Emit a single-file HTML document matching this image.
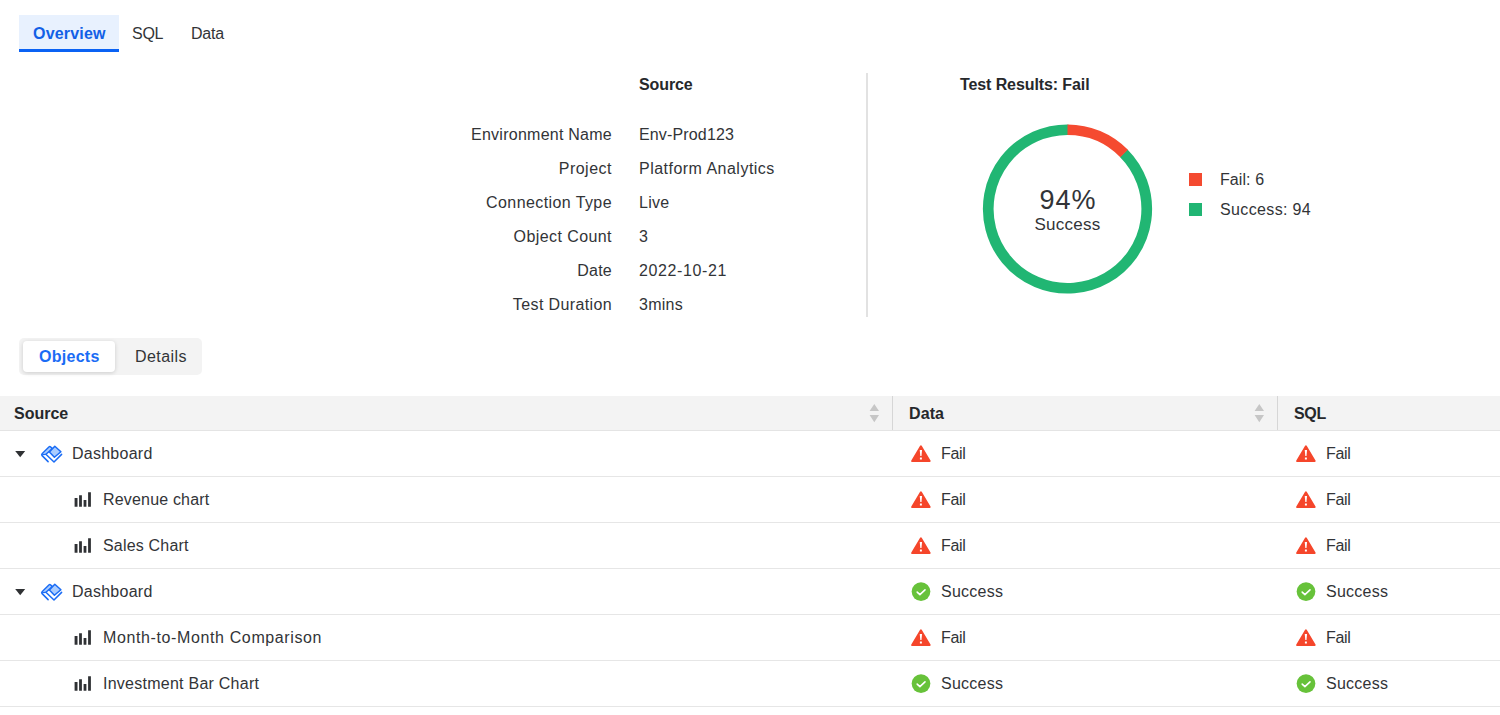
<!DOCTYPE html>
<html><head><meta charset="utf-8">
<style>
html,body{margin:0;padding:0;background:#fff;}
body{width:1500px;height:715px;position:relative;overflow:hidden;font-family:"Liberation Sans",sans-serif;color:#323437;font-size:16px;}
.t{position:absolute;white-space:nowrap;line-height:18px;height:18px;margin-top:1px;letter-spacing:0.25px;}
.b{font-weight:bold;color:#26282b;}
.r{text-align:right;}
.b{letter-spacing:0;}
.ttl{font-size:16px;letter-spacing:-0.1px;}
.abs{position:absolute;}
.row{position:absolute;left:0;width:1500px;height:45px;border-bottom:1px solid #e6e6e6;}
</style></head><body>

<!-- tabs -->
<div class="abs" style="left:19px;top:15px;width:100px;height:34px;background:#e8f1fe;"></div>
<div class="abs" style="left:19px;top:49px;width:100px;height:3px;background:#0a62f4;"></div>
<div class="t b" style="left:33px;top:24px;color:#1260e6;letter-spacing:0.2px;">Overview</div>
<div class="t" style="left:132px;top:24px;letter-spacing:-0.25px;">SQL</div>
<div class="t" style="left:191px;top:24px;letter-spacing:-0.18px;">Data</div>

<!-- source details -->
<div class="t b ttl" style="left:639px;top:75px;">Source</div>
<div class="t r" style="left:412px;width:200px;top:125px;">Environment Name</div>
<div class="t r" style="left:412px;width:200px;top:159px;letter-spacing:0.5px;">Project</div>
<div class="t r" style="left:412px;width:200px;top:193px;letter-spacing:0.41px;">Connection Type</div>
<div class="t r" style="left:412px;width:200px;top:227px;letter-spacing:0.42px;">Object Count</div>
<div class="t r" style="left:412px;width:200px;top:261px;">Date</div>
<div class="t r" style="left:412px;width:200px;top:295px;letter-spacing:0.375px;">Test Duration</div>
<div class="t" style="left:639px;top:125px;letter-spacing:0.15px;">Env-Prod123</div>
<div class="t" style="left:639px;top:159px;letter-spacing:0.48px;">Platform Analytics</div>
<div class="t" style="left:639px;top:193px;">Live</div>
<div class="t" style="left:639px;top:227px;">3</div>
<div class="t" style="left:639px;top:261px;letter-spacing:0.61px;">2022-10-21</div>
<div class="t" style="left:639px;top:295px;">3mins</div>

<div class="abs" style="left:866px;top:73px;width:2px;height:244px;background:#e2e2e2;"></div>

<!-- test results -->
<div class="t b ttl" style="left:960px;top:75px;">Test Results: Fail</div>
<svg class="abs" style="left:967px;top:109px;" width="200" height="200" viewBox="0 0 200 200">
  <path d="M156.73 44.16 A79.25 79.25 0 1 1 101.33 20.75" fill="none" stroke="#21b673" stroke-width="10.7"/>
  <path d="M100.5 20.75 A79.25 79.25 0 0 1 157.1 44.54" fill="none" stroke="#f54a30" stroke-width="10.7"/>
</svg>
<div class="t" style="left:967px;width:201px;text-align:center;top:185px;font-size:27px;line-height:29px;height:29px;letter-spacing:1px;text-indent:1px;">94%</div>
<div class="t" style="left:967px;width:201px;text-align:center;top:215px;font-size:17px;">Success</div>

<div class="abs" style="left:1188.5px;top:172.5px;width:13.3px;height:13.3px;background:#f44a30;"></div>
<div class="abs" style="left:1188.5px;top:202.5px;width:13.3px;height:13.3px;background:#20b573;"></div>
<div class="t" style="left:1220px;top:170px;letter-spacing:0.08px;">Fail: 6</div>
<div class="t" style="left:1220px;top:200px;letter-spacing:0.36px;">Success: 94</div>

<!-- segmented -->
<div class="abs" style="left:19px;top:338px;width:183px;height:37px;background:#f3f3f3;border-radius:5px;"></div>
<div class="abs" style="left:23px;top:341px;width:92px;height:31px;background:#fff;border-radius:4px;box-shadow:0 1px 4px rgba(0,0,0,0.16);"></div>
<div class="t b" style="left:39px;top:347px;color:#1a6cf5;letter-spacing:0.28px;">Objects</div>
<div class="t" style="left:135px;top:347px;letter-spacing:0.42px;">Details</div>

<!-- table header -->
<div class="abs" style="left:0;top:396px;width:1500px;height:34px;background:#f3f3f3;border-bottom:1px solid #e4e4e4;"></div>
<div class="abs" style="left:892px;top:396px;width:1px;height:34px;background:#d6d6d6;"></div>
<div class="abs" style="left:1277px;top:396px;width:1px;height:34px;background:#d6d6d6;"></div>
<div class="t b" style="left:14px;top:404px;">Source</div>
<div class="t b" style="left:909px;top:404px;letter-spacing:0.1px;">Data</div>
<div class="t b" style="left:1294px;top:404px;letter-spacing:-0.3px;">SQL</div>
<svg class="abs" style="left:869px;top:403px;" width="11" height="20" viewBox="0 0 11 20"><path d="M5.3 1 L10 8 L0.6 8 Z M0.6 12 L10 12 L5.3 19.3 Z" fill="#c6c6c6"/></svg>
<svg class="abs" style="left:1254px;top:403px;" width="11" height="20" viewBox="0 0 11 20"><path d="M5.3 1 L10 8 L0.6 8 Z M0.6 12 L10 12 L5.3 19.3 Z" fill="#c6c6c6"/></svg>

<div id="rows">
<div class="row" style="top:431px;">
<svg class="abs" style="left:14px;top:19px;" width="12" height="8" viewBox="0 0 12 8"><path d="M1.2 1 L11.2 1 L6.2 7.2 Z" fill="#2f3134"/></svg>
<svg class="abs" style="left:38px;top:11px;" width="28" height="24" viewBox="0 0 28 24"><path d="M12 4.6 L4.2 12.4 L7.9 12.3 L14.3 6.4 Z" fill="#a9ccff"/><path d="M10.1 19.6 L4.1 13.6 Q3.2 12.7 4.1 11.8 L10.9 5 Q11.8 4.1 12.7 5 L14.3 6.6" fill="none" stroke="#1a6cf5" stroke-width="1.5" stroke-linecap="round"/><path d="M4.2 12.6 L7.9 12.3" stroke="#1a6cf5" stroke-width="1.2"/><path d="M14.5 6.6 L7.9 12.3 L16 20 L23.6 12.4" fill="none" stroke="#1a6cf5" stroke-width="1.5" stroke-linecap="round" stroke-linejoin="round"/><path d="M16.8 4.2 L22.9 9.7 L16.4 15.3 L11.4 10.1 Z" fill="#a9ccff" stroke="#1a6cf5" stroke-width="1.5" stroke-linejoin="round"/></svg>
<div class="t" style="left:72px;top:13px;">Dashboard</div>
<svg class="abs" style="left:909px;top:12px;" width="24" height="20" viewBox="0 0 24 20"><path d="M11.9 3.2 L3.1 18.1 L20.7 18.1 Z" fill="#f5462b" stroke="#f5462b" stroke-width="1.9" stroke-linejoin="round"/><path d="M10.75 6.9 L13.05 6.9 L12.5 13.1 L11.3 13.1 Z" fill="#fff"/><rect x="10.9" y="14.4" width="2" height="2.1" rx="0.3" fill="#fff"/></svg>
<div class="t" style="left:941px;top:13px;letter-spacing:-0.3px;">Fail</div>
<svg class="abs" style="left:1294px;top:12px;" width="24" height="20" viewBox="0 0 24 20"><path d="M11.9 3.2 L3.1 18.1 L20.7 18.1 Z" fill="#f5462b" stroke="#f5462b" stroke-width="1.9" stroke-linejoin="round"/><path d="M10.75 6.9 L13.05 6.9 L12.5 13.1 L11.3 13.1 Z" fill="#fff"/><rect x="10.9" y="14.4" width="2" height="2.1" rx="0.3" fill="#fff"/></svg>
<div class="t" style="left:1326px;top:13px;letter-spacing:-0.3px;">Fail</div>
</div>
<div class="row" style="top:477px;">
<svg class="abs" style="left:66px;top:7px;" width="30" height="24" viewBox="0 0 30 24"><path d="M8.6 14.1h2.9v8.6h-2.9z M13.1 11.2h2.8v11.5h-2.8z M17.6 15.9h2.8v6.8h-2.8z M22.1 8.2h2.8v14.5h-2.8z" fill="#2f3134"/></svg>
<div class="t" style="left:103px;top:13px;letter-spacing:0.18px;">Revenue chart</div>
<svg class="abs" style="left:909px;top:12px;" width="24" height="20" viewBox="0 0 24 20"><path d="M11.9 3.2 L3.1 18.1 L20.7 18.1 Z" fill="#f5462b" stroke="#f5462b" stroke-width="1.9" stroke-linejoin="round"/><path d="M10.75 6.9 L13.05 6.9 L12.5 13.1 L11.3 13.1 Z" fill="#fff"/><rect x="10.9" y="14.4" width="2" height="2.1" rx="0.3" fill="#fff"/></svg>
<div class="t" style="left:941px;top:13px;letter-spacing:-0.3px;">Fail</div>
<svg class="abs" style="left:1294px;top:12px;" width="24" height="20" viewBox="0 0 24 20"><path d="M11.9 3.2 L3.1 18.1 L20.7 18.1 Z" fill="#f5462b" stroke="#f5462b" stroke-width="1.9" stroke-linejoin="round"/><path d="M10.75 6.9 L13.05 6.9 L12.5 13.1 L11.3 13.1 Z" fill="#fff"/><rect x="10.9" y="14.4" width="2" height="2.1" rx="0.3" fill="#fff"/></svg>
<div class="t" style="left:1326px;top:13px;letter-spacing:-0.3px;">Fail</div>
</div>
<div class="row" style="top:523px;">
<svg class="abs" style="left:66px;top:7px;" width="30" height="24" viewBox="0 0 30 24"><path d="M8.6 14.1h2.9v8.6h-2.9z M13.1 11.2h2.8v11.5h-2.8z M17.6 15.9h2.8v6.8h-2.8z M22.1 8.2h2.8v14.5h-2.8z" fill="#2f3134"/></svg>
<div class="t" style="left:103px;top:13px;letter-spacing:0.19px;">Sales Chart</div>
<svg class="abs" style="left:909px;top:12px;" width="24" height="20" viewBox="0 0 24 20"><path d="M11.9 3.2 L3.1 18.1 L20.7 18.1 Z" fill="#f5462b" stroke="#f5462b" stroke-width="1.9" stroke-linejoin="round"/><path d="M10.75 6.9 L13.05 6.9 L12.5 13.1 L11.3 13.1 Z" fill="#fff"/><rect x="10.9" y="14.4" width="2" height="2.1" rx="0.3" fill="#fff"/></svg>
<div class="t" style="left:941px;top:13px;letter-spacing:-0.3px;">Fail</div>
<svg class="abs" style="left:1294px;top:12px;" width="24" height="20" viewBox="0 0 24 20"><path d="M11.9 3.2 L3.1 18.1 L20.7 18.1 Z" fill="#f5462b" stroke="#f5462b" stroke-width="1.9" stroke-linejoin="round"/><path d="M10.75 6.9 L13.05 6.9 L12.5 13.1 L11.3 13.1 Z" fill="#fff"/><rect x="10.9" y="14.4" width="2" height="2.1" rx="0.3" fill="#fff"/></svg>
<div class="t" style="left:1326px;top:13px;letter-spacing:-0.3px;">Fail</div>
</div>
<div class="row" style="top:569px;">
<svg class="abs" style="left:14px;top:19px;" width="12" height="8" viewBox="0 0 12 8"><path d="M1.2 1 L11.2 1 L6.2 7.2 Z" fill="#2f3134"/></svg>
<svg class="abs" style="left:38px;top:11px;" width="28" height="24" viewBox="0 0 28 24"><path d="M12 4.6 L4.2 12.4 L7.9 12.3 L14.3 6.4 Z" fill="#a9ccff"/><path d="M10.1 19.6 L4.1 13.6 Q3.2 12.7 4.1 11.8 L10.9 5 Q11.8 4.1 12.7 5 L14.3 6.6" fill="none" stroke="#1a6cf5" stroke-width="1.5" stroke-linecap="round"/><path d="M4.2 12.6 L7.9 12.3" stroke="#1a6cf5" stroke-width="1.2"/><path d="M14.5 6.6 L7.9 12.3 L16 20 L23.6 12.4" fill="none" stroke="#1a6cf5" stroke-width="1.5" stroke-linecap="round" stroke-linejoin="round"/><path d="M16.8 4.2 L22.9 9.7 L16.4 15.3 L11.4 10.1 Z" fill="#a9ccff" stroke="#1a6cf5" stroke-width="1.5" stroke-linejoin="round"/></svg>
<div class="t" style="left:72px;top:13px;">Dashboard</div>
<svg class="abs" style="left:909px;top:12px;" width="24" height="20" viewBox="0 0 24 20"><circle cx="12" cy="10.6" r="9.35" fill="#67c23a"/><path d="M8.2 11.1 L10.9 13.6 L16 8.8" fill="none" stroke="#fff" stroke-width="1.6" stroke-linecap="round" stroke-linejoin="round"/></svg>
<div class="t" style="left:941px;top:13px;">Success</div>
<svg class="abs" style="left:1294px;top:12px;" width="24" height="20" viewBox="0 0 24 20"><circle cx="12" cy="10.6" r="9.35" fill="#67c23a"/><path d="M8.2 11.1 L10.9 13.6 L16 8.8" fill="none" stroke="#fff" stroke-width="1.6" stroke-linecap="round" stroke-linejoin="round"/></svg>
<div class="t" style="left:1326px;top:13px;">Success</div>
</div>
<div class="row" style="top:615px;">
<svg class="abs" style="left:66px;top:7px;" width="30" height="24" viewBox="0 0 30 24"><path d="M8.6 14.1h2.9v8.6h-2.9z M13.1 11.2h2.8v11.5h-2.8z M17.6 15.9h2.8v6.8h-2.8z M22.1 8.2h2.8v14.5h-2.8z" fill="#2f3134"/></svg>
<div class="t" style="left:103px;top:13px;letter-spacing:0.62px;">Month-to-Month Comparison</div>
<svg class="abs" style="left:909px;top:12px;" width="24" height="20" viewBox="0 0 24 20"><path d="M11.9 3.2 L3.1 18.1 L20.7 18.1 Z" fill="#f5462b" stroke="#f5462b" stroke-width="1.9" stroke-linejoin="round"/><path d="M10.75 6.9 L13.05 6.9 L12.5 13.1 L11.3 13.1 Z" fill="#fff"/><rect x="10.9" y="14.4" width="2" height="2.1" rx="0.3" fill="#fff"/></svg>
<div class="t" style="left:941px;top:13px;letter-spacing:-0.3px;">Fail</div>
<svg class="abs" style="left:1294px;top:12px;" width="24" height="20" viewBox="0 0 24 20"><path d="M11.9 3.2 L3.1 18.1 L20.7 18.1 Z" fill="#f5462b" stroke="#f5462b" stroke-width="1.9" stroke-linejoin="round"/><path d="M10.75 6.9 L13.05 6.9 L12.5 13.1 L11.3 13.1 Z" fill="#fff"/><rect x="10.9" y="14.4" width="2" height="2.1" rx="0.3" fill="#fff"/></svg>
<div class="t" style="left:1326px;top:13px;letter-spacing:-0.3px;">Fail</div>
</div>
<div class="row" style="top:661px;">
<svg class="abs" style="left:66px;top:7px;" width="30" height="24" viewBox="0 0 30 24"><path d="M8.6 14.1h2.9v8.6h-2.9z M13.1 11.2h2.8v11.5h-2.8z M17.6 15.9h2.8v6.8h-2.8z M22.1 8.2h2.8v14.5h-2.8z" fill="#2f3134"/></svg>
<div class="t" style="left:103px;top:13px;letter-spacing:0.25px;">Investment Bar Chart</div>
<svg class="abs" style="left:909px;top:12px;" width="24" height="20" viewBox="0 0 24 20"><circle cx="12" cy="10.6" r="9.35" fill="#67c23a"/><path d="M8.2 11.1 L10.9 13.6 L16 8.8" fill="none" stroke="#fff" stroke-width="1.6" stroke-linecap="round" stroke-linejoin="round"/></svg>
<div class="t" style="left:941px;top:13px;">Success</div>
<svg class="abs" style="left:1294px;top:12px;" width="24" height="20" viewBox="0 0 24 20"><circle cx="12" cy="10.6" r="9.35" fill="#67c23a"/><path d="M8.2 11.1 L10.9 13.6 L16 8.8" fill="none" stroke="#fff" stroke-width="1.6" stroke-linecap="round" stroke-linejoin="round"/></svg>
<div class="t" style="left:1326px;top:13px;">Success</div>
</div>
</div>
</body></html>
